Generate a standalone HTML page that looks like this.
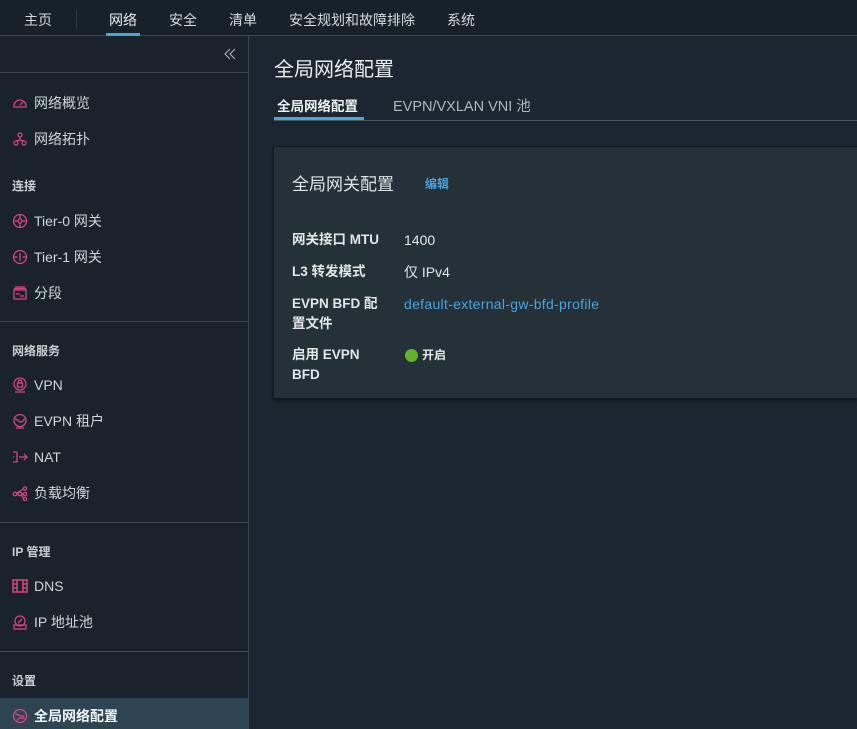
<!DOCTYPE html>
<html><head><meta charset="utf-8"><style>
*{margin:0;padding:0;box-sizing:border-box}
body{width:857px;height:729px;overflow:hidden;background:#1b2630;font-family:"Liberation Sans","Noto Sans CJK SC",sans-serif;color:#d8dde0;position:relative}
.hdr{position:absolute;left:0;top:0;width:857px;height:36px;background:#17212a;border-bottom:1px solid #3b4750}
.hdr span{position:absolute;top:10px;font-size:14px;color:#d5dade}
.hdr .act{color:#e8ecee}
.hdr .ul{position:absolute;left:106px;top:33px;width:34px;height:3px;background:#49a7d6}
.sep{position:absolute;left:76px;top:10px;width:1px;height:18px;background:#2e3a43}
.side{position:absolute;left:0;top:36px;width:249px;height:693px;background:#1a232c;border-right:1px solid #3b4750}
.it{position:absolute;left:12px;font-size:14px;color:#cfd5d9;display:flex;align-items:center;height:20px}
.it svg{width:16px;height:16px;margin-right:6px}
.lab{position:absolute;left:12px;font-size:12px;font-weight:bold;color:#c8cfd4}
.hr{position:absolute;left:0;width:248px;height:1px;background:#3b4750}
.main{position:absolute;left:249px;top:36px;right:0;bottom:0}
.t{position:absolute;font-size:13.5px;font-weight:bold;color:#e2e6e8;line-height:20px}
.v{position:absolute;font-size:14px;color:#e2e6e8;line-height:20px}
</style></head><body>
<div class="hdr">
<span style="left:24px">主页</span><div class="sep"></div>
<span class="act" style="left:109px">网络</span>
<span style="left:169px">安全</span>
<span style="left:229px">清单</span>
<span style="left:289px">安全规划和故障排除</span>
<span style="left:447px">系统</span>
<div class="ul"></div>
</div>
<div class="side">
<svg style="position:absolute;left:224px;top:12px" width="12" height="12" viewBox="0 0 12 12" fill="none" stroke="#aab3b9" stroke-width="1.1"><path d="M6 1L1 6l5 5M11 1L6 6l5 5"/></svg>
<div class="hr" style="top:36px"></div>
<div class="it" style="top:57px"><svg viewBox="0 0 16 16" fill="none" stroke="#d4467f" stroke-width="1.3"><path d="M2 11a6 6 0 1 1 12 0v1H2z"/><path d="M8 10l3-3"/></svg>网络概览</div>
<div class="it" style="top:93px"><svg viewBox="0 0 16 16" fill="none" stroke="#d4467f" stroke-width="1.3"><circle cx="8" cy="4" r="2"/><circle cx="4" cy="12" r="2"/><circle cx="12" cy="12" r="2"/><path d="M8 6v3M4 10l4-1 4 1"/></svg>网络拓扑</div>
<div class="lab" style="top:141px">连接</div>
<div class="it" style="top:175px"><svg viewBox="0 0 16 16" fill="none" stroke="#d4467f" stroke-width="1.3"><circle cx="8" cy="8" r="6.5"/><circle cx="8" cy="8" r="2"/><path d="M8 1.5v4M8 10.5v4M1.5 8h4M10.5 8h4"/></svg>Tier-0 网关</div>
<div class="it" style="top:211px"><svg viewBox="0 0 16 16" fill="none" stroke="#d4467f" stroke-width="1.3"><circle cx="8" cy="8" r="6.5"/><path d="M8 4v8M1.5 8h4M10.5 8h4"/></svg>Tier-1 网关</div>
<div class="it" style="top:247px"><svg viewBox="0 0 16 16" fill="none" stroke="#d4467f" stroke-width="1.3"><rect x="2" y="5" width="12" height="9"/><path d="M3 2h10M2 3.5h12M4 9h4M8 11h4"/></svg>分段</div>
<div class="hr" style="top:285px"></div>
<div class="lab" style="top:306px">网络服务</div>
<div class="it" style="top:339px"><svg viewBox="0 0 16 16" fill="none" stroke="#d4467f" stroke-width="1.3"><circle cx="8" cy="7" r="6"/><rect x="5.5" y="6" width="5" height="4"/><path d="M6.5 6V4.5a1.5 1.5 0 0 1 3 0V6M3 15h10"/></svg>VPN</div>
<div class="it" style="top:375px"><svg viewBox="0 0 16 16" fill="none" stroke="#d4467f" stroke-width="1.3"><circle cx="8" cy="7.5" r="6"/><path d="M3 6c3 0 3 3 6 3s2-3 4-3"/><path d="M4 15h8"/></svg>EVPN 租户</div>
<div class="it" style="top:411px"><svg viewBox="0 0 16 16" fill="none" stroke="#d4467f" stroke-width="1.3"><path d="M1 3h4M1 8h1M1 13h4M5 3v10M7 8h8M12 5l3 3-3 3"/></svg>NAT</div>
<div class="it" style="top:447px"><svg viewBox="0 0 16 16" fill="none" stroke="#d4467f" stroke-width="1.3"><circle cx="3" cy="9" r="1.8"/><circle cx="8" cy="9" r="1.8"/><circle cx="13" cy="3.5" r="1.6"/><circle cx="13" cy="9" r="1.6"/><circle cx="13" cy="14" r="1.6"/><path d="M4.8 8l6.6-4M9.8 9h1.6M9.5 10l2 3"/></svg>负载均衡</div>
<div class="hr" style="top:486px"></div>
<div class="lab" style="top:507px">IP 管理</div>
<div class="it" style="top:540px"><svg viewBox="0 0 16 16" fill="none" stroke="#d4467f" stroke-width="1.5"><rect x="1" y="2" width="14" height="12"/><path d="M5 2v12M11 2v12M1 6h4M1 10h4M11 6h4M11 10h4"/></svg>DNS</div>
<div class="it" style="top:576px"><svg viewBox="0 0 16 16" fill="none" stroke="#d4467f" stroke-width="1.3"><circle cx="8" cy="7" r="5"/><rect x="2" y="11" width="12" height="4"/><path d="M6 9l4-4"/></svg>IP 地址池</div>
<div class="hr" style="top:615px"></div>
<div class="lab" style="top:636px">设置</div>
<div style="position:absolute;left:0;top:662px;width:248px;height:31px;background:#2d4453"></div>
<div class="it" style="top:670px;color:#f0f3f5;font-weight:bold"><svg viewBox="0 0 16 16" fill="none" stroke="#d4467f" stroke-width="1.3"><circle cx="8" cy="8" r="6.5"/><path d="M3 5c3 1 4 4 9 3M5 13c1-3 4-4 8-2"/></svg>全局网络配置</div>
</div>
<div class="main">
<div style="position:absolute;left:25px;top:17px;font-size:20px;color:#e8ecee">全局网络配置</div>
<div style="position:absolute;left:28px;top:59px;font-size:13.5px;font-weight:bold;color:#eef1f3">全局网络配置</div>
<div style="position:absolute;left:144px;top:59px;font-size:14.5px;color:#aeb7bd">EVPN/VXLAN VNI 池</div>
<div style="position:absolute;left:25px;top:84px;right:0;height:1px;background:#4a565e"></div>
<div style="position:absolute;left:25px;top:81px;width:90px;height:3px;background:#49a7d6"></div>
<div style="position:absolute;left:24px;top:110px;right:0;height:253px;background:#243139;border:1px solid #131b21;border-right:none;box-shadow:0 2px 2px #10171c"></div>
<div style="position:absolute;left:43px;top:134px;font-size:17px;color:#dfe3e6">全局网关配置</div>
<div style="position:absolute;left:176px;top:139px;font-size:12px;font-weight:bold;color:#4aa3d9">编辑</div>
<div class="t" style="left:43px;top:194px">网关接口 MTU</div><div class="v" style="left:155px;top:194px">1400</div>
<div class="t" style="left:43px;top:226px">L3 转发模式</div><div class="v" style="left:155px;top:226px">仅 IPv4</div>
<div class="t" style="left:43px;top:258px;width:100px">EVPN BFD 配<br>置文件</div><div class="v" style="left:155px;top:258px;color:#4aa3d9;letter-spacing:0.3px">default-external-gw-bfd-profile</div>
<div class="t" style="left:43px;top:309px">启用 EVPN<br>BFD</div>
<div style="position:absolute;left:156px;top:313px;width:13px;height:13px;border-radius:50%;background:#62b32a"></div>
<div class="t" style="left:173px;top:309px;font-size:12px">开启</div>
</div>
</body></html>
